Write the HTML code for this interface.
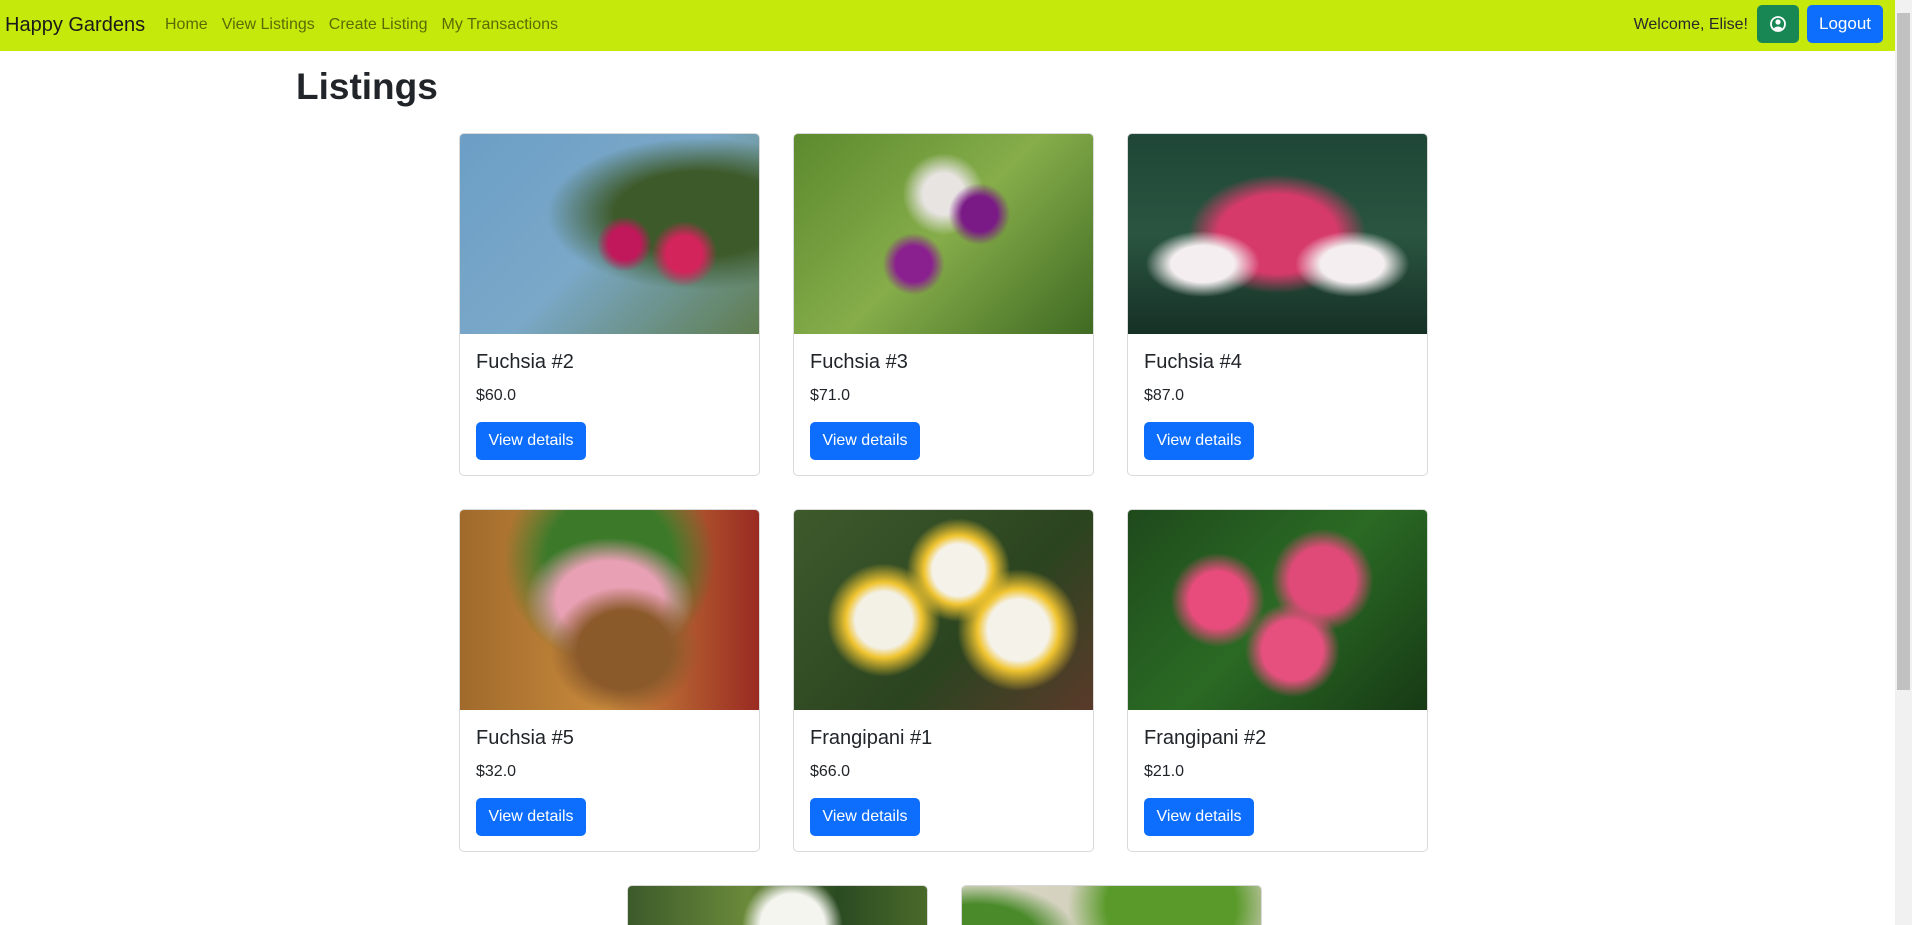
<!DOCTYPE html>
<html><head><meta charset="utf-8"><style>
*{box-sizing:border-box;margin:0;padding:0}
html,body{width:1912px;height:925px;overflow:hidden}
body{background:#fff;font-family:"Liberation Sans",Arial,sans-serif;color:#212529;position:relative}
.nav{position:absolute;left:0;top:0;width:1895px;height:51px;background:#c5e90b}
.brand{position:absolute;left:5px;top:14px;font-size:20px;color:#1a1a1a}
.links{position:absolute;left:165px;top:16px;font-size:16px;color:rgba(0,0,0,.55)}
.links span{margin-right:14px}
.welcome{position:absolute;right:147px;top:16px;font-size:16px;color:#2a2a2a}
.ubtn{position:absolute;left:1757px;top:5px;width:42px;height:38px;background:#198754;border-radius:5px}
.lbtn{position:absolute;left:1807px;top:5px;width:76px;height:38px;background:#0d6efd;border-radius:5px;color:#fff;font-size:17px;text-align:center;line-height:38px}
.sb{position:absolute;left:1895px;top:0;width:17px;height:925px;background:#f1f1f1}
.sb div{position:absolute;left:2px;top:13px;width:13px;height:677px;background:#c1c1c1}
h1{position:absolute;left:296px;top:66px;font-size:37px;font-weight:bold;color:#212529}
.card{position:absolute;width:301px;border:1px solid rgba(0,0,0,.15);border-radius:5px;overflow:hidden;background:#fff;height:343px}
.img{height:200px}
.t{position:absolute;left:16px;top:217px;font-size:20px;color:#212529}
.p{position:absolute;left:16px;top:253px;font-size:16px}
.b{position:absolute;left:16px;top:288px;width:110px;height:38px;background:#0d6efd;border-radius:5px;color:#fff;font-size:16px;line-height:38px;text-align:center}
.cut{height:40px;border-bottom:none;border-radius:5px 5px 0 0}
</style></head><body>
<div class="nav">
<div class="brand">Happy Gardens</div>
<div class="links"><span>Home</span><span>View Listings</span><span>Create Listing</span><span>My Transactions</span></div>
<div class="welcome">Welcome, Elise!</div>
<div class="ubtn"><svg width="42" height="38" viewBox="0 0 42 38"><circle cx="21" cy="19" r="7" fill="none" stroke="#fff" stroke-width="1.8"/><circle cx="21" cy="17" r="2.6" fill="#fff"/><path d="M16.5 23.5 Q21 19.5 25.5 23.5 Q21 27 16.5 23.5Z" fill="#fff"/></svg></div>
<div class="lbtn">Logout</div>
</div>
<div class="sb"><div></div></div>
<h1>Listings</h1>

<div class="card" style="left:459px;top:133px"><div class="img" style="background:radial-gradient(circle at 55% 55%,#c0185a 0 8%,transparent 14%),radial-gradient(circle at 75% 60%,#d4245c 0 7%,transparent 13%),radial-gradient(ellipse at 80% 40%,#3d5a2a 0 25%,transparent 45%),linear-gradient(135deg,#6c9ec6,#7aa8c8 50%,#5f7d4f)"></div><div class="t">Fuchsia #2</div><div class="p">$60.0</div><div class="b">View details</div></div>
<div class="card" style="left:793px;top:133px"><div class="img" style="background:radial-gradient(circle at 40% 65%,#8a1f8f 0 8%,transparent 14%),radial-gradient(circle at 62% 40%,#7a1a86 0 8%,transparent 14%),radial-gradient(circle at 50% 30%,#e8e4e2 0 10%,transparent 20%),linear-gradient(135deg,#5c8a2e,#86ad4a 50%,#3f6a22)"></div><div class="t">Fuchsia #3</div><div class="p">$71.0</div><div class="b">View details</div></div>
<div class="card" style="left:1127px;top:133px"><div class="img" style="background:radial-gradient(ellipse at 25% 65%,#f4eef0 0 10%,transparent 18%),radial-gradient(ellipse at 75% 65%,#f4eef0 0 10%,transparent 18%),radial-gradient(ellipse at 50% 50%,#d63a6a 0 28%,transparent 42%),linear-gradient(180deg,#1f4636,#2a5540 50%,#163026)"></div><div class="t">Fuchsia #4</div><div class="p">$87.0</div><div class="b">View details</div></div>

<div class="card" style="left:459px;top:509px"><div class="img" style="background:radial-gradient(ellipse at 55% 70%,#8b5a2b 0 20%,transparent 32%),radial-gradient(ellipse at 50% 45%,#e8a0b4 0 25%,transparent 40%),radial-gradient(ellipse at 50% 25%,#3c7a2a 0 30%,transparent 50%),linear-gradient(90deg,#a06a2c,#c98a3c 50%,#9a2a22)"></div><div class="t">Fuchsia #5</div><div class="p">$32.0</div><div class="b">View details</div></div>
<div class="card" style="left:793px;top:509px"><div class="img" style="background:radial-gradient(circle at 30% 55%,#f3f0e6 0 12%,#f0c430 16%,transparent 24%),radial-gradient(circle at 55% 30%,#f5f2ea 0 12%,#f0c430 16%,transparent 24%),radial-gradient(circle at 75% 60%,#f5f2ea 0 12%,#f0c430 16%,transparent 24%),linear-gradient(135deg,#3e5a2c,#2b4420 60%,#5a3a2a)"></div><div class="t">Frangipani #1</div><div class="p">$66.0</div><div class="b">View details</div></div>
<div class="card" style="left:1127px;top:509px"><div class="img" style="background:radial-gradient(circle at 30% 45%,#e84c7c 0 12%,transparent 20%),radial-gradient(circle at 65% 35%,#e04a78 0 14%,transparent 22%),radial-gradient(circle at 55% 70%,#e6507e 0 14%,transparent 22%),linear-gradient(135deg,#1f4a1c,#2a6a24 50%,#173a15)"></div><div class="t">Frangipani #2</div><div class="p">$21.0</div><div class="b">View details</div></div>

<div class="card cut" style="left:627px;top:885px"><div class="img" style="background:radial-gradient(circle at 55% 20%,#f5f5f0 0 14%,transparent 22%),linear-gradient(90deg,#3b5a2a,#6b8a3a 40%,#2a4a22 70%,#4a6a2a)"></div></div>
<div class="card cut" style="left:961px;top:885px"><div class="img" style="background:radial-gradient(ellipse at 70% 10%,#5a9a2a 0 22%,transparent 35%),radial-gradient(ellipse at 5% 25%,#4a8a2a 0 15%,transparent 25%),linear-gradient(90deg,#d8d6c4,#cfcbb8)"></div></div>
</body></html>
